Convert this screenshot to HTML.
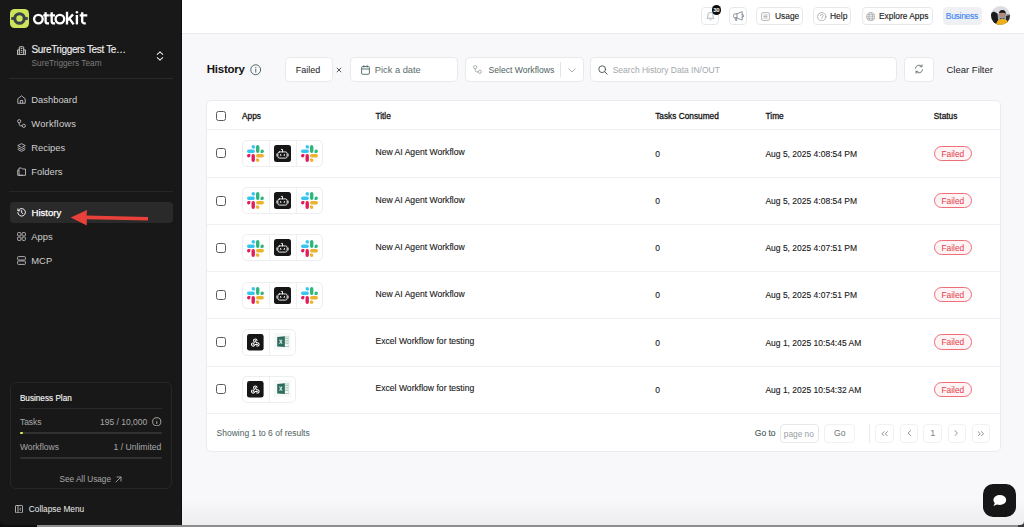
<!DOCTYPE html>
<html><head><meta charset="utf-8">
<style>
*{box-sizing:border-box;margin:0;padding:0}
html,body{width:1024px;height:527px;overflow:hidden;background:#a9a9a9;font-family:"Liberation Sans",sans-serif}
.t{position:absolute;line-height:1;white-space:nowrap}
.b{font-weight:bold}
#bottom{position:absolute;left:0;top:525px;width:1024px;height:2px;background:#8e8e8e}
#bl{position:absolute;left:0;top:510px;width:37px;height:17px;background:#0e0e0e}#br{position:absolute;left:1018px;top:515px;width:6px;height:12px;background:#3a3a3a}
#app{position:absolute;left:0;top:0;width:1024px;height:525.3px;border-radius:0 0 4px 5px;overflow:hidden}#mainbg{position:absolute;left:182px;top:0;width:842px;height:526px;background:linear-gradient(#f8f8fa 0,#f8f8fa 500px,#ededef 526px)}
#side{position:absolute;left:0;top:0;width:182px;border-right:1px solid #0d0d0d;height:525px;background:#181818}
#side .nav{color:#cfcfcf;font-size:9.4px}
.ic{position:absolute}
#header{position:absolute;left:182px;top:0;width:842px;height:34px;background:#fff;border-bottom:1px solid #e8eaee}
.hb{position:absolute;top:7px;height:18px;border:1px solid #e6e8ec;border-radius:4px;background:#fff}
.box{position:absolute;background:#fff;border:1px solid #e7e9ed;border-radius:4.5px}
#card{position:absolute;left:206px;top:99.8px;width:794.6px;height:352.6px;background:#fff;border:1px solid #e9ebee;border-radius:5px}
.hline{position:absolute;left:207px;width:792.6px;height:1px;background:#eff0f3}
.cb{position:absolute;left:216px;width:10px;height:10px;border:1px solid #5a5a5a;border-radius:2.5px;background:#fff}
.th{font-size:8.3px;color:#161616;-webkit-text-stroke:0.3px #161616}
.td{font-size:8.5px;color:#161616;-webkit-text-stroke:0.1px #161616}
.grp{position:absolute;left:242px;height:27px;border:1px solid #edeef1;border-radius:5px;background:#fff}
.grp .dv{position:absolute;top:0;width:1px;height:25px;background:#eff0f3}
.pill{position:absolute;left:933.8px;width:38px;height:15.3px;border:1px solid #ee6f78;border-radius:7.7px;background:#fff4f5;color:#e23b48;font-size:8.4px;line-height:14px;text-align:center}
.pg{position:absolute;top:423.6px;width:18.5px;height:19.2px;border:1px solid #f0f1f4;border-radius:4px;background:#fff}
</style></head><body>
<div id="bottom"></div><div id="bl"></div><div id="br"></div>
<div id="app">
<div id="mainbg"></div>
<!-- SIDEBAR -->
<div id="side">
  <!-- logo -->
  <svg class="ic" style="left:10px;top:9px" width="19" height="19" viewBox="0 0 19 19">
    <rect x="0" y="0" width="19" height="19" rx="4.5" fill="#cde35a"/>
    <circle cx="9.5" cy="9.5" r="4.75" fill="none" stroke="#3b4148" stroke-width="3.1"/>
    <rect x="1.2" y="8.1" width="3.4" height="2.8" fill="#3b4148"/>
    <rect x="14.4" y="8.1" width="3.4" height="2.8" fill="#3b4148"/>
  </svg>
  <svg class="ic" style="left:0;top:0" width="100" height="34" viewBox="0 0 100 34" fill="none" stroke="#fff" stroke-width="2.35" stroke-linecap="butt">
    <circle cx="38.4" cy="19.1" r="4.3"/>
    <path d="M45.6 12.3V21.2a2.2 2.2 0 0 0 2.2 2.2H49M43.2 15.4H48.9"/>
    <path d="M51.7 12.3V21.2a2.2 2.2 0 0 0 2.2 2.2H55.1M49.3 15.4H55"/>
    <circle cx="59.9" cy="19.1" r="4.3"/>
    <path d="M67 11.7V24.4M67.6 20.3L73 14.4M69.3 18.4L73.6 24.4"/>
    <path d="M76.9 15V24.4"/>
    <circle cx="76.9" cy="12.3" r="1.25" fill="#fff" stroke="none"/>
    <path d="M82.2 12.3V21.2a2.2 2.2 0 0 0 2.2 2.2H85.8M79.7 15.4H87.3"/>
  </svg>

  <!-- team -->
  <svg class="ic" style="left:17px;top:45.5px" width="9" height="9.5" viewBox="0 0 9 9.5" fill="none" stroke="#d6d6d6" stroke-width="0.95" stroke-linejoin="round"><path d="M2.3 3.9H0.6v5H8.4v-5H6.7"/><rect x="2.3" y="0.8" width="4.4" height="8.1" rx="0.5"/><path d="M3.7 2.5h1.6M3.7 4.4h1.6M3.7 6.3h1.6"/></svg>
  <div class="t" style="left:31.5px;top:44.8px;font-size:10px;color:#f2f2f2;letter-spacing:-0.35px;-webkit-text-stroke:0.12px #f2f2f2">SureTriggers Test Te…</div>
  <div class="t" style="left:31.5px;top:59.1px;font-size:8.3px;color:#7c7c7c">SureTriggers Team</div>
  <svg class="ic" style="left:155.5px;top:51px" width="8" height="10" viewBox="0 0 8 10" fill="none" stroke="#e6e6e6" stroke-width="1.1" stroke-linecap="round" stroke-linejoin="round">
    <path d="M1.3 3.4L4 0.9 6.7 3.4M1.3 6.6L4 9.1 6.7 6.6"/>
  </svg>
  <div style="position:absolute;left:9px;top:78px;width:164px;height:1px;background:#2a2a2a"></div>

  <!-- nav -->
  <svg class="ic" style="left:17px;top:95px" width="9" height="9" viewBox="0 0 9 9" fill="none" stroke="#bdbdbd" stroke-width="0.9" stroke-linejoin="round"><path d="M0.8 3.8L4.5 0.8 8.2 3.8V8.3H0.8z"/><path d="M3.3 8.3V5.5h2.4v2.8"/></svg>
  <div class="t nav" style="left:31.3px;top:95.4px">Dashboard</div>
  <svg class="ic" style="left:17px;top:119px" width="9" height="9" viewBox="0 0 9 9" fill="none" stroke="#bdbdbd" stroke-width="0.9"><circle cx="2.2" cy="2.2" r="1.6"/><circle cx="6.8" cy="6.8" r="1.6"/><path d="M2.2 3.8v1.5a1.5 1.5 0 0 0 1.5 1.5h1.5"/></svg>
  <div class="t nav" style="left:31.3px;top:119.1px;letter-spacing:0.2px">Workflows</div>
  <svg class="ic" style="left:17px;top:143px" width="9" height="9" viewBox="0 0 9 9" fill="none" stroke="#bdbdbd" stroke-width="0.9" stroke-linejoin="round"><path d="M4.5 0.7L8.3 2.6 4.5 4.5 0.7 2.6z"/><path d="M0.7 4.6L4.5 6.5 8.3 4.6M0.7 6.4L4.5 8.3 8.3 6.4"/></svg>
  <div class="t nav" style="left:31.3px;top:143.4px">Recipes</div>
  <svg class="ic" style="left:17px;top:167px" width="9" height="9" viewBox="0 0 9 9" fill="none" stroke="#bdbdbd" stroke-width="0.9" stroke-linejoin="round"><path d="M2 2.2V1h2.5l1 1h3v6.3H2z"/><path d="M2 3H0.7v5.3H6"/></svg>
  <div class="t nav" style="left:31.3px;top:167.1px">Folders</div>
  <div style="position:absolute;left:9px;top:191px;width:164px;height:1px;background:#262626"></div>

  <div style="position:absolute;left:10px;top:202px;width:162.5px;height:21.3px;background:#2a2a2a;border-radius:4px"></div>
  <svg class="ic" style="left:17px;top:207.5px" width="9" height="9" viewBox="0 0 9 9" fill="none" stroke="#f0f0f0" stroke-width="1" stroke-linecap="round"><path d="M1.2 2.6A3.8 3.8 0 1 1 0.8 4.6"/><path d="M0.9 0.9v1.9h1.9"/><path d="M4.6 2.6v2l1.3 1"/></svg>
  <div class="t nav" style="left:31.5px;top:207.8px;color:#fff;font-size:9.6px;-webkit-text-stroke:0.25px #fff">History</div>
  <svg class="ic" style="left:17px;top:232px" width="9" height="9" viewBox="0 0 9 9" fill="none" stroke="#bdbdbd" stroke-width="0.9"><rect x="0.6" y="0.6" width="3.3" height="3.3" rx="0.7"/><rect x="5.1" y="0.6" width="3.3" height="3.3" rx="0.7"/><rect x="0.6" y="5.1" width="3.3" height="3.3" rx="0.7"/><rect x="5.1" y="5.1" width="3.3" height="3.3" rx="0.7"/></svg>
  <div class="t nav" style="left:31.3px;top:232px">Apps</div>
  <svg class="ic" style="left:17px;top:255.5px" width="9" height="9" viewBox="0 0 9 9" fill="none" stroke="#bdbdbd" stroke-width="0.9"><rect x="0.6" y="0.6" width="7.8" height="3.4" rx="0.8"/><rect x="0.6" y="5" width="7.8" height="3.4" rx="0.8"/></svg>
  <div class="t nav" style="left:31.3px;top:255.6px">MCP</div>

  <!-- red arrow -->
  <svg class="ic" style="left:68px;top:208px" width="84" height="20" viewBox="0 0 84 20">
    <path d="M2.7 9.5L19 1.9 18.6 7.6 80 9 80 12.5 18.8 11.3 18.8 17.5z" fill="#e8413a"/>
  </svg>

  <!-- plan card -->
  <div style="position:absolute;left:9.8px;top:381.6px;width:162.6px;height:107.4px;border:1px solid #262626;border-radius:6px"></div>
  <div class="t" style="left:19.9px;top:394.6px;font-size:8.2px;color:#f4f4f4;-webkit-text-stroke:0.15px #f4f4f4">Business Plan</div>
  <div style="position:absolute;left:19.9px;top:408px;width:142px;height:1px;background:#2a2a2a"></div>
  <div class="t" style="left:19.9px;top:417.6px;font-size:8.5px;color:#a8a8a8">Tasks</div>
  <div class="t" style="left:100px;top:417.6px;font-size:8.5px;color:#a8a8a8">195 / 10,000</div>
  <svg class="ic" style="left:152.3px;top:416.6px" width="9.5" height="9.5" viewBox="0 0 10 10" fill="none" stroke="#bdbdbd" stroke-width="0.9"><circle cx="5" cy="5" r="4.3"/><path d="M5 4.4v3M5 2.7v0.4"/></svg>
  <div style="position:absolute;left:19.9px;top:432px;width:142px;height:2px;background:#313131;border-radius:1px"></div>
  <div style="position:absolute;left:19.9px;top:432px;width:3px;height:2px;background:#d6f25a;border-radius:1px"></div>
  <div class="t" style="left:19.9px;top:442.9px;font-size:8.5px;color:#a8a8a8">Workflows</div>
  <div class="t" style="left:113.6px;top:442.9px;font-size:8.6px;color:#a8a8a8">1 / Unlimited</div>
  <div style="position:absolute;left:19.9px;top:457px;width:142px;height:2px;background:#313131;border-radius:1px"></div>
  <div class="t" style="left:59.5px;top:475.8px;font-size:8.2px;color:#a8a8a8">See All Usage</div>
  <svg class="ic" style="left:114.5px;top:475.5px" width="7" height="7" viewBox="0 0 7 7" fill="none" stroke="#a8a8a8" stroke-width="0.9" stroke-linecap="round"><path d="M1 6L6 1M2 1h4v4"/></svg>

  <svg class="ic" style="left:15px;top:505px" width="8" height="8.3" viewBox="0 0 8 8.3" fill="none" stroke="#bdbdbd" stroke-width="0.9"><rect x="0.5" y="0.5" width="7" height="7.3" rx="0.6"/><path d="M3 0.5v7.3M6 2.8L4.6 4.15 6 5.5"/></svg>
  <div class="t" style="left:28.8px;top:505.3px;font-size:8.3px;color:#ececec">Collapse Menu</div>
</div>

<!-- HEADER -->
<div id="header">
</div>
<div class="hb" style="left:701.3px;width:17.7px"></div>
<svg class="ic" style="left:705.5px;top:11px" width="9" height="10" viewBox="0 0 9 10" fill="none" stroke="#a9b0b8" stroke-width="0.9" stroke-linejoin="round"><path d="M1 7.3h7l-0.9-1.3V4a2.6 2.6 0 0 0-5.2 0v2z"/><path d="M3.6 8.6a1 1 0 0 0 1.8 0"/></svg>
<div style="position:absolute;left:711.6px;top:5.3px;width:9.4px;height:9.4px;border-radius:50%;background:#0c0c0c"></div>
<div class="t b" style="left:711.6px;top:7.2px;width:9.4px;text-align:center;font-size:6px;color:#fff;letter-spacing:-0.4px">30</div>
<div class="hb" style="left:729px;width:17.8px"></div>
<svg class="ic" style="left:732.5px;top:11px" width="11" height="10" viewBox="0 0 11 10" fill="none" stroke="#7b8490" stroke-width="0.85" stroke-linejoin="round" stroke-linecap="round"><path d="M3.6 2.9H1.8A1.3 1.3 0 0 0 0.5 4.2v1.3a1.3 1.3 0 0 0 1.3 1.3h1.8z"/><path d="M3.6 2.9L9.2 0.6v8.5L3.6 6.8"/><path d="M2 6.8l0.6 2.6h1.2L3.5 6.8"/><path d="M9.2 3.3a1.5 1.5 0 0 1 0 3.1"/></svg>
<div class="hb" style="left:756.4px;width:46.6px"></div>
<svg class="ic" style="left:760.8px;top:11.5px" width="9" height="9" viewBox="0 0 9 9" fill="none" stroke="#b0b0b0" stroke-width="0.9"><rect x="0.6" y="0.6" width="7.8" height="7.8" rx="1.3"/><path d="M2.5 3h4M2.5 4.5h4M2.5 6h4"/></svg>
<div class="t" style="left:775px;top:12.1px;font-size:8.4px;color:#1c1c1c;-webkit-text-stroke:0.12px #1c1c1c">Usage</div>
<div class="hb" style="left:812.6px;width:38.9px"></div>
<svg class="ic" style="left:817px;top:11.5px" width="9.5" height="9.5" viewBox="0 0 10 10" fill="none" stroke="#a8a8a8" stroke-width="0.9" stroke-linecap="round"><circle cx="5" cy="5" r="4.4"/><path d="M3.6 3.8a1.4 1.4 0 1 1 1.9 1.3c-0.4 0.2-0.5 0.4-0.5 0.9M5 7.3v0.1"/></svg>
<div class="t" style="left:829.9px;top:12.1px;font-size:8.5px;color:#1c1c1c;-webkit-text-stroke:0.12px #1c1c1c">Help</div>
<div class="hb" style="left:861.6px;width:71px"></div>
<svg class="ic" style="left:865.7px;top:11.5px" width="9.5" height="9.5" viewBox="0 0 10 10" fill="none" stroke="#a8a8a8" stroke-width="0.85"><circle cx="5" cy="5" r="4.4"/><ellipse cx="5" cy="5" rx="1.9" ry="4.4"/><path d="M0.6 5h8.8M1.2 2.9h7.6M1.2 7.1h7.6"/></svg>
<div class="t" style="left:879px;top:12.1px;font-size:8.4px;color:#1c1c1c;-webkit-text-stroke:0.15px #1c1c1c">Explore Apps</div>
<div style="position:absolute;left:942.5px;top:7px;width:39px;height:18px;border-radius:4.5px;background:#eef0f4"></div>
<div class="t" style="left:945.8px;top:11.7px;font-size:8.5px;color:#3b82f6;letter-spacing:-0.3px;-webkit-text-stroke:0.1px #3b82f6">Business</div>
<svg class="ic" style="left:991.3px;top:6.3px" width="19" height="19" viewBox="0 0 19 19">
  <defs><clipPath id="av"><circle cx="9.5" cy="9.5" r="9.5"/></clipPath></defs>
  <g clip-path="url(#av)">
    <rect width="19" height="19" fill="#dcdde0"/>
    <rect x="0" y="8" width="19" height="11" fill="#9aa3a8"/>
    <path d="M0 7L3 5.5 6.5 7.5 7.5 19H0z" fill="#1b1b1b"/>
    <path d="M15 10l4-1v10h-4z" fill="#2a2a2a"/>
    <circle cx="11.3" cy="8.5" r="3" fill="#b58a7a"/>
    <path d="M8 7.5a3.4 3.6 0 0 1 6.8 0l-0.4 0.6-1-1.3h-4z" fill="#161616"/>
    <path d="M9 11.8q2.3 1.8 4.6 0l-0.5 1.8h-3.6z" fill="#2a2220"/>
    <path d="M5 19c0.5-4 2.6-6 6.5-6s6 2 6.5 6z" fill="#edae1c"/>
  </g>
</svg>
<!-- MAIN -->
<div class="t b" style="left:206.8px;top:64.1px;font-size:11.5px;color:#141414;letter-spacing:-0.25px">History</div>
<svg class="ic" style="left:249.5px;top:64px" width="11.5" height="11.5" viewBox="0 0 12 12" fill="none" stroke="#3f5b5b" stroke-width="0.95" stroke-linecap="round"><circle cx="6" cy="6" r="5.2"/><path d="M6 5.3v3.3M6 3.4v0.2"/></svg>

<div class="box" style="left:285.0px;top:57px;width:48.0px;height:24.8px"></div>
<div class="t" style="left:295.7px;top:66.2px;font-size:9px;color:#222">Failed</div>
<svg class="ic" style="left:336px;top:66.5px" width="6" height="6" viewBox="0 0 6 6" stroke="#444" stroke-width="0.9"><path d="M0.8 0.8l4.4 4.4M5.2 0.8L0.8 5.2"/></svg>

<div class="box" style="left:349.8px;top:57px;width:108.0px;height:24.8px"></div>
<svg class="ic" style="left:360.5px;top:64.5px" width="9" height="10" viewBox="0 0 9 10" fill="none" stroke="#4b6464" stroke-width="0.9"><rect x="0.6" y="1.5" width="7.8" height="7.8" rx="1.2"/><path d="M0.6 4h7.8M2.8 0.3v2.2M6.2 0.3v2.2"/></svg>
<div class="t" style="left:374.8px;top:65.8px;font-size:9.3px;color:#5d6b6b">Pick a date</div>

<div class="box" style="left:464.5px;top:57px;width:119.0px;height:24.8px"></div>
<svg class="ic" style="left:472.8px;top:64.8px" width="9" height="9" viewBox="0 0 9 9" fill="none" stroke="#9aa3a3" stroke-width="0.85"><circle cx="2.2" cy="2.2" r="1.6"/><circle cx="6.8" cy="6.8" r="1.6"/><path d="M2.2 3.8v1.5a1.5 1.5 0 0 0 1.5 1.5h1.5"/></svg>
<div class="t" style="left:488.5px;top:65.7px;font-size:8.6px;color:#4f5f5f">Select Workflows</div>
<div style="position:absolute;left:560.3px;top:62px;width:1px;height:14.5px;background:#e2e4e7"></div>
<svg class="ic" style="left:568px;top:67.5px" width="8" height="5" viewBox="0 0 8 5" fill="none" stroke="#9aa3a3" stroke-width="0.9" stroke-linecap="round"><path d="M0.8 0.8L4 4 7.2 0.8"/></svg>

<div class="box" style="left:590.1px;top:57px;width:307.0px;height:24.8px"></div>
<svg class="ic" style="left:598px;top:64.5px" width="10" height="10" viewBox="0 0 10 10" fill="none" stroke="#555f5f" stroke-width="1" stroke-linecap="round"><circle cx="4.2" cy="4.2" r="3.4"/><path d="M6.7 6.7L9.2 9.2"/></svg>
<div class="t" style="left:612.7px;top:65.8px;font-size:8.5px;color:#a2a8ab">Search History Data IN/OUT</div>

<div class="box" style="left:904.4px;top:57px;width:30.1px;height:24.8px"></div>
<svg class="ic" style="left:914.2px;top:64.4px" width="10" height="10" viewBox="0 0 10 10" fill="none" stroke="#6f7475" stroke-width="0.95" stroke-linecap="round" stroke-linejoin="round"><g transform="translate(10,0) scale(-1,1)"><path d="M8.6 4.3A3.7 3.7 0 0 0 2 2.6M1.4 5.7A3.7 3.7 0 0 0 8 7.4"/><path d="M2 0.8v1.9h1.9M8 9.2V7.3H6.1"/></g></svg>
<div class="t" style="left:946.5px;top:64.9px;font-size:9.5px;color:#1e1e1e">Clear Filter</div>

<div id="card"></div>
<div class="hline" style="top:129.3px"></div>
<div class="cb" style="top:111px"></div>
<div class="t th" style="left:242px;top:111.9px">Apps</div>
<div class="t th" style="left:375.4px;top:111.9px">Title</div>
<div class="t th" style="left:655.2px;top:111.9px">Tasks Consumed</div>
<div class="t th" style="left:765.6px;top:111.9px">Time</div>
<div class="t th" style="left:933.8px;top:111.9px">Status</div>
<div class="cb" style="top:148.4px"></div>
<div class="grp" style="top:140.0px;width:81px"><div class="dv" style="left:26px"></div><div class="dv" style="left:52.8px"></div></div>
<svg class="ic" style="left:247.0px;top:145.1px" width="17" height="17" viewBox="0 0 54 54"><path fill="#36C5F0" d="M19.712.133a5.381 5.381 0 0 0-5.376 5.387 5.381 5.381 0 0 0 5.376 5.386h5.376V5.52A5.381 5.381 0 0 0 19.712.133m0 14.365H5.376A5.381 5.381 0 0 0 0 19.884a5.381 5.381 0 0 0 5.376 5.387h14.336a5.381 5.381 0 0 0 5.376-5.387 5.381 5.381 0 0 0-5.376-5.386"/><path fill="#2EB67D" d="M53.76 19.884a5.381 5.381 0 0 0-5.376-5.386 5.381 5.381 0 0 0-5.376 5.386v5.387h5.376a5.381 5.381 0 0 0 5.376-5.387m-14.336 0V5.52A5.381 5.381 0 0 0 34.048.133a5.381 5.381 0 0 0-5.376 5.387v14.364a5.381 5.381 0 0 0 5.376 5.387 5.381 5.381 0 0 0 5.376-5.387"/><path fill="#ECB22E" d="M34.048 54a5.381 5.381 0 0 0 5.376-5.387 5.381 5.381 0 0 0-5.376-5.386h-5.376v5.386A5.381 5.381 0 0 0 34.048 54m0-14.365h14.336a5.381 5.381 0 0 0 5.376-5.386 5.381 5.381 0 0 0-5.376-5.387H34.048a5.381 5.381 0 0 0-5.376 5.387 5.381 5.381 0 0 0 5.376 5.386"/><path fill="#E01E5A" d="M0 34.249a5.381 5.381 0 0 0 5.376 5.386 5.381 5.381 0 0 0 5.376-5.386v-5.387H5.376A5.381 5.381 0 0 0 0 34.25m14.336-.001v14.364A5.381 5.381 0 0 0 19.712 54a5.381 5.381 0 0 0 5.376-5.387V34.25a5.381 5.381 0 0 0-5.376-5.387 5.381 5.381 0 0 0-5.376 5.387"/></svg>
<svg class="ic" style="left:274.1px;top:145.0px" width="17" height="17" viewBox="0 0 17 17"><rect width="17" height="17" rx="2.5" fill="#161616"/><g fill="none" stroke="#fff" stroke-width="0.9" stroke-linecap="round" stroke-linejoin="round"><rect x="3.9" y="6.9" width="9.2" height="6.2" rx="1.6"/><path d="M8.5 6.9V4.4H7.3M2.9 9v2M14.1 9v2"/><path d="M6.4 9.3l0.8 0.8-0.8 0.8M10.6 9.3l-0.8 0.8 0.8 0.8"/></g></svg>
<svg class="ic" style="left:300.5px;top:145.1px" width="17" height="17" viewBox="0 0 54 54"><path fill="#36C5F0" d="M19.712.133a5.381 5.381 0 0 0-5.376 5.387 5.381 5.381 0 0 0 5.376 5.386h5.376V5.52A5.381 5.381 0 0 0 19.712.133m0 14.365H5.376A5.381 5.381 0 0 0 0 19.884a5.381 5.381 0 0 0 5.376 5.387h14.336a5.381 5.381 0 0 0 5.376-5.387 5.381 5.381 0 0 0-5.376-5.386"/><path fill="#2EB67D" d="M53.76 19.884a5.381 5.381 0 0 0-5.376-5.386 5.381 5.381 0 0 0-5.376 5.386v5.387h5.376a5.381 5.381 0 0 0 5.376-5.387m-14.336 0V5.52A5.381 5.381 0 0 0 34.048.133a5.381 5.381 0 0 0-5.376 5.387v14.364a5.381 5.381 0 0 0 5.376 5.387 5.381 5.381 0 0 0 5.376-5.387"/><path fill="#ECB22E" d="M34.048 54a5.381 5.381 0 0 0 5.376-5.387 5.381 5.381 0 0 0-5.376-5.386h-5.376v5.386A5.381 5.381 0 0 0 34.048 54m0-14.365h14.336a5.381 5.381 0 0 0 5.376-5.386 5.381 5.381 0 0 0-5.376-5.387H34.048a5.381 5.381 0 0 0-5.376 5.387 5.381 5.381 0 0 0 5.376 5.386"/><path fill="#E01E5A" d="M0 34.249a5.381 5.381 0 0 0 5.376 5.386 5.381 5.381 0 0 0 5.376-5.386v-5.387H5.376A5.381 5.381 0 0 0 0 34.25m14.336-.001v14.364A5.381 5.381 0 0 0 19.712 54a5.381 5.381 0 0 0 5.376-5.387V34.25a5.381 5.381 0 0 0-5.376-5.387 5.381 5.381 0 0 0-5.376 5.387"/></svg>
<div class="t td" style="left:375.5px;top:148.4px;font-size:8.6px">New AI Agent Workflow</div>
<div class="t td" style="left:655.2px;top:149.8px">0</div>
<div class="t td" style="left:765.4px;top:149.7px">Aug 5, 2025 4:08:54 PM</div>
<div class="pill" style="top:145.6px">Failed</div>
<div class="hline" style="top:176.7px"></div>
<div class="cb" style="top:195.6px"></div>
<div class="grp" style="top:187.2px;width:81px"><div class="dv" style="left:26px"></div><div class="dv" style="left:52.8px"></div></div>
<svg class="ic" style="left:247.0px;top:192.3px" width="17" height="17" viewBox="0 0 54 54"><path fill="#36C5F0" d="M19.712.133a5.381 5.381 0 0 0-5.376 5.387 5.381 5.381 0 0 0 5.376 5.386h5.376V5.52A5.381 5.381 0 0 0 19.712.133m0 14.365H5.376A5.381 5.381 0 0 0 0 19.884a5.381 5.381 0 0 0 5.376 5.387h14.336a5.381 5.381 0 0 0 5.376-5.387 5.381 5.381 0 0 0-5.376-5.386"/><path fill="#2EB67D" d="M53.76 19.884a5.381 5.381 0 0 0-5.376-5.386 5.381 5.381 0 0 0-5.376 5.386v5.387h5.376a5.381 5.381 0 0 0 5.376-5.387m-14.336 0V5.52A5.381 5.381 0 0 0 34.048.133a5.381 5.381 0 0 0-5.376 5.387v14.364a5.381 5.381 0 0 0 5.376 5.387 5.381 5.381 0 0 0 5.376-5.387"/><path fill="#ECB22E" d="M34.048 54a5.381 5.381 0 0 0 5.376-5.387 5.381 5.381 0 0 0-5.376-5.386h-5.376v5.386A5.381 5.381 0 0 0 34.048 54m0-14.365h14.336a5.381 5.381 0 0 0 5.376-5.386 5.381 5.381 0 0 0-5.376-5.387H34.048a5.381 5.381 0 0 0-5.376 5.387 5.381 5.381 0 0 0 5.376 5.386"/><path fill="#E01E5A" d="M0 34.249a5.381 5.381 0 0 0 5.376 5.386 5.381 5.381 0 0 0 5.376-5.386v-5.387H5.376A5.381 5.381 0 0 0 0 34.25m14.336-.001v14.364A5.381 5.381 0 0 0 19.712 54a5.381 5.381 0 0 0 5.376-5.387V34.25a5.381 5.381 0 0 0-5.376-5.387 5.381 5.381 0 0 0-5.376 5.387"/></svg>
<svg class="ic" style="left:274.1px;top:192.2px" width="17" height="17" viewBox="0 0 17 17"><rect width="17" height="17" rx="2.5" fill="#161616"/><g fill="none" stroke="#fff" stroke-width="0.9" stroke-linecap="round" stroke-linejoin="round"><rect x="3.9" y="6.9" width="9.2" height="6.2" rx="1.6"/><path d="M8.5 6.9V4.4H7.3M2.9 9v2M14.1 9v2"/><path d="M6.4 9.3l0.8 0.8-0.8 0.8M10.6 9.3l-0.8 0.8 0.8 0.8"/></g></svg>
<svg class="ic" style="left:300.5px;top:192.3px" width="17" height="17" viewBox="0 0 54 54"><path fill="#36C5F0" d="M19.712.133a5.381 5.381 0 0 0-5.376 5.387 5.381 5.381 0 0 0 5.376 5.386h5.376V5.52A5.381 5.381 0 0 0 19.712.133m0 14.365H5.376A5.381 5.381 0 0 0 0 19.884a5.381 5.381 0 0 0 5.376 5.387h14.336a5.381 5.381 0 0 0 5.376-5.387 5.381 5.381 0 0 0-5.376-5.386"/><path fill="#2EB67D" d="M53.76 19.884a5.381 5.381 0 0 0-5.376-5.386 5.381 5.381 0 0 0-5.376 5.386v5.387h5.376a5.381 5.381 0 0 0 5.376-5.387m-14.336 0V5.52A5.381 5.381 0 0 0 34.048.133a5.381 5.381 0 0 0-5.376 5.387v14.364a5.381 5.381 0 0 0 5.376 5.387 5.381 5.381 0 0 0 5.376-5.387"/><path fill="#ECB22E" d="M34.048 54a5.381 5.381 0 0 0 5.376-5.387 5.381 5.381 0 0 0-5.376-5.386h-5.376v5.386A5.381 5.381 0 0 0 34.048 54m0-14.365h14.336a5.381 5.381 0 0 0 5.376-5.386 5.381 5.381 0 0 0-5.376-5.387H34.048a5.381 5.381 0 0 0-5.376 5.387 5.381 5.381 0 0 0 5.376 5.386"/><path fill="#E01E5A" d="M0 34.249a5.381 5.381 0 0 0 5.376 5.386 5.381 5.381 0 0 0 5.376-5.386v-5.387H5.376A5.381 5.381 0 0 0 0 34.25m14.336-.001v14.364A5.381 5.381 0 0 0 19.712 54a5.381 5.381 0 0 0 5.376-5.387V34.25a5.381 5.381 0 0 0-5.376-5.387 5.381 5.381 0 0 0-5.376 5.387"/></svg>
<div class="t td" style="left:375.5px;top:195.6px;font-size:8.6px">New AI Agent Workflow</div>
<div class="t td" style="left:655.2px;top:197.0px">0</div>
<div class="t td" style="left:765.4px;top:196.9px">Aug 5, 2025 4:08:54 PM</div>
<div class="pill" style="top:192.8px">Failed</div>
<div class="hline" style="top:223.9px"></div>
<div class="cb" style="top:242.8px"></div>
<div class="grp" style="top:234.4px;width:81px"><div class="dv" style="left:26px"></div><div class="dv" style="left:52.8px"></div></div>
<svg class="ic" style="left:247.0px;top:239.5px" width="17" height="17" viewBox="0 0 54 54"><path fill="#36C5F0" d="M19.712.133a5.381 5.381 0 0 0-5.376 5.387 5.381 5.381 0 0 0 5.376 5.386h5.376V5.52A5.381 5.381 0 0 0 19.712.133m0 14.365H5.376A5.381 5.381 0 0 0 0 19.884a5.381 5.381 0 0 0 5.376 5.387h14.336a5.381 5.381 0 0 0 5.376-5.387 5.381 5.381 0 0 0-5.376-5.386"/><path fill="#2EB67D" d="M53.76 19.884a5.381 5.381 0 0 0-5.376-5.386 5.381 5.381 0 0 0-5.376 5.386v5.387h5.376a5.381 5.381 0 0 0 5.376-5.387m-14.336 0V5.52A5.381 5.381 0 0 0 34.048.133a5.381 5.381 0 0 0-5.376 5.387v14.364a5.381 5.381 0 0 0 5.376 5.387 5.381 5.381 0 0 0 5.376-5.387"/><path fill="#ECB22E" d="M34.048 54a5.381 5.381 0 0 0 5.376-5.387 5.381 5.381 0 0 0-5.376-5.386h-5.376v5.386A5.381 5.381 0 0 0 34.048 54m0-14.365h14.336a5.381 5.381 0 0 0 5.376-5.386 5.381 5.381 0 0 0-5.376-5.387H34.048a5.381 5.381 0 0 0-5.376 5.387 5.381 5.381 0 0 0 5.376 5.386"/><path fill="#E01E5A" d="M0 34.249a5.381 5.381 0 0 0 5.376 5.386 5.381 5.381 0 0 0 5.376-5.386v-5.387H5.376A5.381 5.381 0 0 0 0 34.25m14.336-.001v14.364A5.381 5.381 0 0 0 19.712 54a5.381 5.381 0 0 0 5.376-5.387V34.25a5.381 5.381 0 0 0-5.376-5.387 5.381 5.381 0 0 0-5.376 5.387"/></svg>
<svg class="ic" style="left:274.1px;top:239.4px" width="17" height="17" viewBox="0 0 17 17"><rect width="17" height="17" rx="2.5" fill="#161616"/><g fill="none" stroke="#fff" stroke-width="0.9" stroke-linecap="round" stroke-linejoin="round"><rect x="3.9" y="6.9" width="9.2" height="6.2" rx="1.6"/><path d="M8.5 6.9V4.4H7.3M2.9 9v2M14.1 9v2"/><path d="M6.4 9.3l0.8 0.8-0.8 0.8M10.6 9.3l-0.8 0.8 0.8 0.8"/></g></svg>
<svg class="ic" style="left:300.5px;top:239.5px" width="17" height="17" viewBox="0 0 54 54"><path fill="#36C5F0" d="M19.712.133a5.381 5.381 0 0 0-5.376 5.387 5.381 5.381 0 0 0 5.376 5.386h5.376V5.52A5.381 5.381 0 0 0 19.712.133m0 14.365H5.376A5.381 5.381 0 0 0 0 19.884a5.381 5.381 0 0 0 5.376 5.387h14.336a5.381 5.381 0 0 0 5.376-5.387 5.381 5.381 0 0 0-5.376-5.386"/><path fill="#2EB67D" d="M53.76 19.884a5.381 5.381 0 0 0-5.376-5.386 5.381 5.381 0 0 0-5.376 5.386v5.387h5.376a5.381 5.381 0 0 0 5.376-5.387m-14.336 0V5.52A5.381 5.381 0 0 0 34.048.133a5.381 5.381 0 0 0-5.376 5.387v14.364a5.381 5.381 0 0 0 5.376 5.387 5.381 5.381 0 0 0 5.376-5.387"/><path fill="#ECB22E" d="M34.048 54a5.381 5.381 0 0 0 5.376-5.387 5.381 5.381 0 0 0-5.376-5.386h-5.376v5.386A5.381 5.381 0 0 0 34.048 54m0-14.365h14.336a5.381 5.381 0 0 0 5.376-5.386 5.381 5.381 0 0 0-5.376-5.387H34.048a5.381 5.381 0 0 0-5.376 5.387 5.381 5.381 0 0 0 5.376 5.386"/><path fill="#E01E5A" d="M0 34.249a5.381 5.381 0 0 0 5.376 5.386 5.381 5.381 0 0 0 5.376-5.386v-5.387H5.376A5.381 5.381 0 0 0 0 34.25m14.336-.001v14.364A5.381 5.381 0 0 0 19.712 54a5.381 5.381 0 0 0 5.376-5.387V34.25a5.381 5.381 0 0 0-5.376-5.387 5.381 5.381 0 0 0-5.376 5.387"/></svg>
<div class="t td" style="left:375.5px;top:242.8px;font-size:8.6px">New AI Agent Workflow</div>
<div class="t td" style="left:655.2px;top:244.2px">0</div>
<div class="t td" style="left:765.4px;top:244.1px">Aug 5, 2025 4:07:51 PM</div>
<div class="pill" style="top:240.0px">Failed</div>
<div class="hline" style="top:271.1px"></div>
<div class="cb" style="top:290.0px"></div>
<div class="grp" style="top:281.6px;width:81px"><div class="dv" style="left:26px"></div><div class="dv" style="left:52.8px"></div></div>
<svg class="ic" style="left:247.0px;top:286.7px" width="17" height="17" viewBox="0 0 54 54"><path fill="#36C5F0" d="M19.712.133a5.381 5.381 0 0 0-5.376 5.387 5.381 5.381 0 0 0 5.376 5.386h5.376V5.52A5.381 5.381 0 0 0 19.712.133m0 14.365H5.376A5.381 5.381 0 0 0 0 19.884a5.381 5.381 0 0 0 5.376 5.387h14.336a5.381 5.381 0 0 0 5.376-5.387 5.381 5.381 0 0 0-5.376-5.386"/><path fill="#2EB67D" d="M53.76 19.884a5.381 5.381 0 0 0-5.376-5.386 5.381 5.381 0 0 0-5.376 5.386v5.387h5.376a5.381 5.381 0 0 0 5.376-5.387m-14.336 0V5.52A5.381 5.381 0 0 0 34.048.133a5.381 5.381 0 0 0-5.376 5.387v14.364a5.381 5.381 0 0 0 5.376 5.387 5.381 5.381 0 0 0 5.376-5.387"/><path fill="#ECB22E" d="M34.048 54a5.381 5.381 0 0 0 5.376-5.387 5.381 5.381 0 0 0-5.376-5.386h-5.376v5.386A5.381 5.381 0 0 0 34.048 54m0-14.365h14.336a5.381 5.381 0 0 0 5.376-5.386 5.381 5.381 0 0 0-5.376-5.387H34.048a5.381 5.381 0 0 0-5.376 5.387 5.381 5.381 0 0 0 5.376 5.386"/><path fill="#E01E5A" d="M0 34.249a5.381 5.381 0 0 0 5.376 5.386 5.381 5.381 0 0 0 5.376-5.386v-5.387H5.376A5.381 5.381 0 0 0 0 34.25m14.336-.001v14.364A5.381 5.381 0 0 0 19.712 54a5.381 5.381 0 0 0 5.376-5.387V34.25a5.381 5.381 0 0 0-5.376-5.387 5.381 5.381 0 0 0-5.376 5.387"/></svg>
<svg class="ic" style="left:274.1px;top:286.6px" width="17" height="17" viewBox="0 0 17 17"><rect width="17" height="17" rx="2.5" fill="#161616"/><g fill="none" stroke="#fff" stroke-width="0.9" stroke-linecap="round" stroke-linejoin="round"><rect x="3.9" y="6.9" width="9.2" height="6.2" rx="1.6"/><path d="M8.5 6.9V4.4H7.3M2.9 9v2M14.1 9v2"/><path d="M6.4 9.3l0.8 0.8-0.8 0.8M10.6 9.3l-0.8 0.8 0.8 0.8"/></g></svg>
<svg class="ic" style="left:300.5px;top:286.7px" width="17" height="17" viewBox="0 0 54 54"><path fill="#36C5F0" d="M19.712.133a5.381 5.381 0 0 0-5.376 5.387 5.381 5.381 0 0 0 5.376 5.386h5.376V5.52A5.381 5.381 0 0 0 19.712.133m0 14.365H5.376A5.381 5.381 0 0 0 0 19.884a5.381 5.381 0 0 0 5.376 5.387h14.336a5.381 5.381 0 0 0 5.376-5.387 5.381 5.381 0 0 0-5.376-5.386"/><path fill="#2EB67D" d="M53.76 19.884a5.381 5.381 0 0 0-5.376-5.386 5.381 5.381 0 0 0-5.376 5.386v5.387h5.376a5.381 5.381 0 0 0 5.376-5.387m-14.336 0V5.52A5.381 5.381 0 0 0 34.048.133a5.381 5.381 0 0 0-5.376 5.387v14.364a5.381 5.381 0 0 0 5.376 5.387 5.381 5.381 0 0 0 5.376-5.387"/><path fill="#ECB22E" d="M34.048 54a5.381 5.381 0 0 0 5.376-5.387 5.381 5.381 0 0 0-5.376-5.386h-5.376v5.386A5.381 5.381 0 0 0 34.048 54m0-14.365h14.336a5.381 5.381 0 0 0 5.376-5.386 5.381 5.381 0 0 0-5.376-5.387H34.048a5.381 5.381 0 0 0-5.376 5.387 5.381 5.381 0 0 0 5.376 5.386"/><path fill="#E01E5A" d="M0 34.249a5.381 5.381 0 0 0 5.376 5.386 5.381 5.381 0 0 0 5.376-5.386v-5.387H5.376A5.381 5.381 0 0 0 0 34.25m14.336-.001v14.364A5.381 5.381 0 0 0 19.712 54a5.381 5.381 0 0 0 5.376-5.387V34.25a5.381 5.381 0 0 0-5.376-5.387 5.381 5.381 0 0 0-5.376 5.387"/></svg>
<div class="t td" style="left:375.5px;top:290.0px;font-size:8.6px">New AI Agent Workflow</div>
<div class="t td" style="left:655.2px;top:291.4px">0</div>
<div class="t td" style="left:765.4px;top:291.3px">Aug 5, 2025 4:07:51 PM</div>
<div class="pill" style="top:287.2px">Failed</div>
<div class="hline" style="top:318.3px"></div>
<div class="cb" style="top:337.2px"></div>
<div class="grp" style="top:328.8px;width:54px"><div class="dv" style="left:26px"></div></div>
<svg class="ic" style="left:247.3px;top:334.1px" width="16.6" height="16.6" viewBox="0 0 17 17"><rect width="17" height="17" rx="2.5" fill="#161616"/><svg x="3.3" y="3.3" width="10.4" height="10.4" viewBox="0 0 24 24" fill="none" stroke="#fff" stroke-width="2.4" stroke-linecap="round" stroke-linejoin="round"><path d="M4.876 13.61a4 4 0 1 0 6.124 3.39h6"/><path d="M15.066 20.502a4 4 0 1 0 1.934-7.502c-.706 0-1.424.179-2 .5l-3-5.5"/><path d="M16 8a4 4 0 1 0-8 0c0 1.506.77 2.818 2 3.5l-3 5.5"/></svg></svg>
<div style="position:absolute;left:274px;top:333.2px;width:16.7px;height:16.5px;background:#f7f8f8"></div><svg class="ic" style="left:276.5px;top:336.2px" width="12.5" height="11.5" viewBox="0 0 12.5 11.5"><rect x="7.6" y="1" width="4.5" height="9.3" fill="#fff" stroke="#7fa89b" stroke-width="0.6"/><path d="M8.2 2.6h3.3M8.2 4.3h3.3M8.2 6h3.3M8.2 7.7h3.3" stroke="#9cbfb3" stroke-width="0.9"/><path d="M0.2 1.1L7.8 0.2V11L0.2 10.4z" fill="#2e6c5e"/><path d="M2.5 3.6l2.6 4.2M5.1 3.6l-2.6 4.2" stroke="#cfe2db" stroke-width="1.1" fill="none"/></svg>
<div class="t td" style="left:375.5px;top:337.2px;font-size:8.6px">Excel Workflow for testing</div>
<div class="t td" style="left:655.2px;top:338.6px">0</div>
<div class="t td" style="left:765.4px;top:338.5px">Aug 1, 2025 10:54:45 AM</div>
<div class="pill" style="top:334.4px">Failed</div>
<div class="hline" style="top:365.5px"></div>
<div class="cb" style="top:384.4px"></div>
<div class="grp" style="top:376.0px;width:54px"><div class="dv" style="left:26px"></div></div>
<svg class="ic" style="left:247.3px;top:381.3px" width="16.6" height="16.6" viewBox="0 0 17 17"><rect width="17" height="17" rx="2.5" fill="#161616"/><svg x="3.3" y="3.3" width="10.4" height="10.4" viewBox="0 0 24 24" fill="none" stroke="#fff" stroke-width="2.4" stroke-linecap="round" stroke-linejoin="round"><path d="M4.876 13.61a4 4 0 1 0 6.124 3.39h6"/><path d="M15.066 20.502a4 4 0 1 0 1.934-7.502c-.706 0-1.424.179-2 .5l-3-5.5"/><path d="M16 8a4 4 0 1 0-8 0c0 1.506.77 2.818 2 3.5l-3 5.5"/></svg></svg>
<div style="position:absolute;left:274px;top:380.4px;width:16.7px;height:16.5px;background:#f7f8f8"></div><svg class="ic" style="left:276.5px;top:383.4px" width="12.5" height="11.5" viewBox="0 0 12.5 11.5"><rect x="7.6" y="1" width="4.5" height="9.3" fill="#fff" stroke="#7fa89b" stroke-width="0.6"/><path d="M8.2 2.6h3.3M8.2 4.3h3.3M8.2 6h3.3M8.2 7.7h3.3" stroke="#9cbfb3" stroke-width="0.9"/><path d="M0.2 1.1L7.8 0.2V11L0.2 10.4z" fill="#2e6c5e"/><path d="M2.5 3.6l2.6 4.2M5.1 3.6l-2.6 4.2" stroke="#cfe2db" stroke-width="1.1" fill="none"/></svg>
<div class="t td" style="left:375.5px;top:384.4px;font-size:8.6px">Excel Workflow for testing</div>
<div class="t td" style="left:655.2px;top:385.8px">0</div>
<div class="t td" style="left:765.4px;top:385.7px">Aug 1, 2025 10:54:32 AM</div>
<div class="pill" style="top:381.6px">Failed</div>
<div class="hline" style="top:412.7px"></div>


<div class="t" style="left:216.6px;top:429.3px;font-size:8.5px;color:#4d5e5e">Showing 1 to 6 of results</div>
<div class="t" style="left:754.8px;top:429.2px;font-size:8.5px;color:#4b5f5f;-webkit-text-stroke:0.15px #4b5f5f">Go to</div>
<div style="position:absolute;left:780.1px;top:424.2px;width:38.5px;height:18.5px;border:1px solid #e6e8eb;border-radius:4px;background:#fff"></div>
<div class="t" style="left:783.8px;top:429.5px;font-size:8.3px;color:#9aa1a4">page no</div>
<div style="position:absolute;left:823.6px;top:424.1px;width:31.1px;height:18.5px;border:1px solid #f0f1f4;border-radius:4px;background:#fff"></div>
<div class="t" style="left:834px;top:429.3px;font-size:8.6px;color:#707878">Go</div>
<div style="position:absolute;left:869.3px;top:423.8px;width:1px;height:19px;background:#e6e9ee"></div>
<div class="pg" style="left:875.4px"></div><svg class="ic" style="left:881px;top:430.5px" width="7.5" height="5.5" viewBox="0 0 7.5 5.5" fill="none" stroke="#889090" stroke-width="0.95" stroke-linecap="round" stroke-linejoin="round"><path d="M3.2 0.6L0.9 2.75 3.2 4.9M6.5 0.6L4.2 2.75 6.5 4.9"/></svg>
<div class="pg" style="left:899.6px"></div><svg class="ic" style="left:906.5px;top:430.2px" width="4.5" height="6.2" viewBox="0 0 4.5 6.2" fill="none" stroke="#889090" stroke-width="0.95" stroke-linecap="round" stroke-linejoin="round"><path d="M3.6 0.6L1 3.1 3.6 5.6"/></svg>
<div class="pg" style="left:923.4px"></div><div class="t" style="left:923.4px;top:429.2px;width:18.5px;text-align:center;font-size:9px;color:#7d8585">1</div>
<div class="pg" style="left:947.6px"></div><svg class="ic" style="left:954.3px;top:430.2px" width="4.5" height="6.2" viewBox="0 0 4.5 6.2" fill="none" stroke="#889090" stroke-width="0.95" stroke-linecap="round" stroke-linejoin="round"><path d="M0.9 0.6L3.5 3.1 0.9 5.6"/></svg>
<div class="pg" style="left:971.7px"></div><svg class="ic" style="left:977.2px;top:430.5px" width="7.5" height="5.5" viewBox="0 0 7.5 5.5" fill="none" stroke="#889090" stroke-width="0.95" stroke-linecap="round" stroke-linejoin="round"><path d="M1 0.6L3.3 2.75 1 4.9M4.3 0.6L6.6 2.75 4.3 4.9"/></svg>

<div style="position:absolute;left:982.7px;top:483.8px;width:33.3px;height:33.3px;border-radius:10px;background:#161616"></div>
<svg class="ic" style="left:992px;top:494px" width="15" height="13" viewBox="0 0 15 13"><ellipse cx="7.8" cy="6" rx="6.4" ry="4.9" fill="#fff"/><path d="M3 8.5L1.5 12 6 10z" fill="#fff"/></svg>

</div>
</body></html>
